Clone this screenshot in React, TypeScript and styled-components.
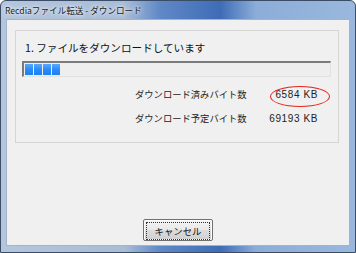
import styled, { createGlobalStyle } from "styled-components";

const GlobalStyle = createGlobalStyle`
  html, body { margin: 0; padding: 0; background: #ffffff; }
  body { font-family: "Noto Sans CJK JP", "Liberation Sans", sans-serif; }
`;

const Window = styled.div`
  width: 356px;
  height: 253px;
  box-sizing: border-box;
  display: flex;
  flex-direction: column;
  border: 1px solid #3b4d66;
  border-radius: 6px 6px 0 0;
  background: linear-gradient(90deg, #b4c6dc 0%, #a8bcd6 35%, #5f88c6 45%, #3e6cb6 62%, #8cadd8 72%, #9ab8dd 100%);
  overflow: hidden;
`;

const TitleBar = styled.div`
  height: 18px;
  display: flex;
  align-items: center;
  padding-left: 4px;
  font-size: 8.6px;
  color: #1c1c1c;
  text-shadow: 0 0 6px #ffffff, 0 0 3px #ffffff;
`;

const Client = styled.div`
  flex: 1;
  margin: 0 5px 6px 5px;
  background: #f0f0f0;
  border: 1px solid #a4b4c8;
  display: flex;
  flex-direction: column;
  align-items: stretch;
`;

const Panel = styled.div`
  position: relative;
  margin: 10px 10px 0 8px;
  height: 113px;
  box-sizing: border-box;
  border: 1px solid #d5d5d5;
  padding: 8px 7px 0 6px;
`;

const Heading = styled.div`
  font-size: 10.6px;
  line-height: 18px;
  color: #111111;
  padding-left: 3px;
`;

const Track = styled.div`
  margin-top: 4px;
  height: 16px;
  box-sizing: border-box;
  border-top: 2px solid #7a7a7a;
  border-left: 2px solid #7a7a7a;
  border-right: 1px solid #e2e2e2;
  border-bottom: 1px solid #e2e2e2;
  background: #eeeeee;
  display: flex;
  gap: 1px;
  padding: 1px;
`;

const Block = styled.div`
  width: 8px;
  height: 100%;
  background: linear-gradient(180deg, #5aa8ff 0%, #2a8cf8 50%, #1e7ff0 100%);
`;

const Stats = styled.div`
  display: grid;
  grid-template-columns: 112px 71px;
  row-gap: 9px;
  margin: 10px 0 0 113px;
  font-size: 9.3px;
  line-height: 15px;
  color: #222222;
`;

const Value = styled.div`
  text-align: right;
  font-family: "Liberation Sans", sans-serif;
  font-size: 10px;
  letter-spacing: 0.6px;
`;

const Mark = styled.div`
  position: absolute;
  left: 254px;
  top: 55px;
  width: 60px;
  height: 21px;
  box-sizing: border-box;
  border: 1.5px solid #e8231d;
  border-radius: 50%;
`;

const ButtonRow = styled.div`
  margin-top: auto;
  display: flex;
  justify-content: center;
  padding-bottom: 4px;
`;

const Button = styled.button`
  width: 70px;
  height: 22px;
  padding: 2px;
  box-sizing: border-box;
  border: 1px solid #707070;
  border-radius: 2px;
  background: linear-gradient(180deg, #f4f4f4 0%, #e8e8e8 50%, #dcdcdc 51%, #d0d0d0 100%);
  box-shadow: inset 0 0 0 1px #fcfcfc;
  font-family: "Noto Sans CJK JP", sans-serif;
  font-size: 9.4px;
  color: #111111;
`;

const Focus = styled.span`
  display: flex;
  align-items: center;
  justify-content: center;
  height: 100%;
  border: 1px dotted #333333;
  line-height: 14px;
`;

export default function App() {
  const blocks = [0, 1, 2, 3];
  return (
    <>
      <GlobalStyle />
      <Window>
        <TitleBar>Recdiaファイル転送 - ダウンロード</TitleBar>
        <Client>
          <Panel>
            <Heading>1. ファイルをダウンロードしています</Heading>
            <Track>
              {blocks.map((b) => (
                <Block key={b} />
              ))}
            </Track>
            <Stats>
              <div>ダウンロード済みバイト数</div>
              <Value>6584 KB</Value>
              <div>ダウンロード予定バイト数</div>
              <Value>69193 KB</Value>
            </Stats>
            <Mark />
          </Panel>
          <ButtonRow>
            <Button>
              <Focus>キャンセル</Focus>
            </Button>
          </ButtonRow>
        </Client>
      </Window>
    </>
  );
}
